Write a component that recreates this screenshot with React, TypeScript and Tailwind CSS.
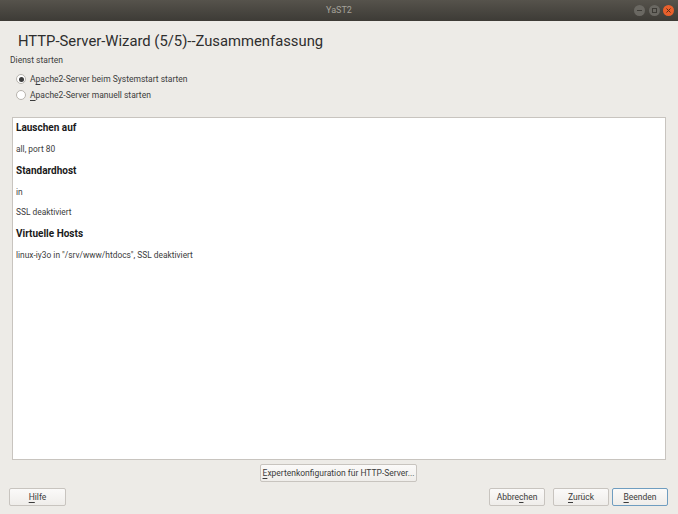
import type { ReactNode } from 'react'

function Btn({ children, width, primary }: { children: ReactNode; width: string; primary?: boolean }) {
  return (
    <button
      type="button"
      className={`${width} block h-[18px] rounded-[2px] border bg-gradient-to-b from-[#fbfaf9] to-[#efedea] text-[8.5px] leading-none text-[#3c3c3c] ${
        primary ? 'border-[#6f9dc0]' : 'border-[#c8c4bf]'
      }`}
    >
      {children}
    </button>
  )
}

function Radio({ checked, children }: { checked?: boolean; children: ReactNode }) {
  return (
    <div className="flex h-[16px] items-center gap-[4px] pl-[16px]">
      <span className="flex h-[10px] w-[10px] items-center justify-center rounded-full border border-[#b8b4ae] bg-white">
        {checked && <span className="h-[5px] w-[5px] rounded-full bg-[#3c3c3c]" />}
      </span>
      <span className="text-[8.5px] text-[#3c3c3c]">{children}</span>
    </div>
  )
}

function Heading({ children }: { children: ReactNode }) {
  return <div className="text-[10px] leading-[12px] font-bold text-[#1a1a1a]">{children}</div>
}

function Line({ children }: { children: ReactNode }) {
  return <div className="text-[8.4px] leading-[10px] text-[#3c3c3c]">{children}</div>
}

export default function App() {
  return (
    <div className="flex h-[514px] w-[678px] flex-col overflow-hidden bg-[#edebe7] font-['Roboto',sans-serif]">
      {/* title bar */}
      <div className="relative flex h-[21px] shrink-0 items-center justify-center bg-gradient-to-b from-[#56534c] to-[#3d3b36]">
        <span className="text-[9px] text-[#a5a29a]">YaST2</span>
        <div className="absolute right-[4px] top-[5px] flex gap-[3.5px]">
          <span className="flex h-[11px] w-[11px] items-center justify-center rounded-full bg-[#6a6862]">
            <svg width="7" height="7" viewBox="0 0 7 7"><path d="M1 3.5h5" stroke="#3d3b36" strokeWidth="1" /></svg>
          </span>
          <span className="flex h-[11px] w-[11px] items-center justify-center rounded-full bg-[#6a6862]">
            <svg width="7" height="7" viewBox="0 0 7 7"><rect x="1.5" y="1.5" width="4" height="4" fill="none" stroke="#3d3b36" /></svg>
          </span>
          <span className="flex h-[11px] w-[11px] items-center justify-center rounded-full bg-[#e9602c]">
            <svg width="7" height="7" viewBox="0 0 7 7"><path d="M1.5 1.5l4 4M5.5 1.5l-4 4" stroke="#5a2a14" strokeWidth="1" /></svg>
          </span>
        </div>
      </div>

      <div className="flex min-h-0 flex-1 flex-col">
        <div className="pl-[18px] pt-[11px] text-[14.8px] leading-[19px] text-[#2e2e2e]">
          HTTP-Server-Wizard (5/5)--Zusammenfassung
        </div>
        <div className="mt-[4px] pl-[10px] text-[8.5px] leading-[11px] text-[#3c3c3c]">Dienst starten</div>
        <div className="mt-[5px]">
          <Radio checked>
            A<span className="underline underline-offset-2">p</span>ache2-Server beim Systemstart starten
          </Radio>
          <Radio>
            <span className="underline underline-offset-2">A</span>pache2-Server manuell starten
          </Radio>
        </div>

        <div className="mx-[12px] mt-[14px] flex h-[343px] flex-col border border-[#c8c4bf] bg-white pl-[3px] pt-[4px]">
          <Heading>Lauschen auf</Heading>
          <div className="mt-[10px]"><Line>all, port 80</Line></div>
          <div className="mt-[11px]"><Heading>Standardhost</Heading></div>
          <div className="mt-[10px]"><Line>in</Line></div>
          <div className="mt-[10px]"><Line>SSL deaktiviert</Line></div>
          <div className="mt-[11px]"><Heading>Virtuelle Hosts</Heading></div>
          <div className="mt-[10px]"><Line>linux-iy3o in "/srv/www/htdocs", SSL deaktiviert</Line></div>
        </div>

        <div className="mt-[4px] flex justify-center pr-[1px]">
          <Btn width="w-[157px]">
            <span className="underline underline-offset-2">E</span>xpertenkonfiguration für HTTP-Server...
          </Btn>
        </div>

        <div className="mt-[6px] flex items-center pl-[9px] pr-[10px]">
          <Btn width="w-[57px]">
            <span className="underline underline-offset-2">H</span>ilfe
          </Btn>
          <div className="ml-auto flex items-center">
            <Btn width="w-[56px]">
              Abbre<span className="underline underline-offset-2">c</span>hen
            </Btn>
            <div className="ml-[8px]">
              <Btn width="w-[56px]">
                <span className="underline underline-offset-2">Z</span>urück
              </Btn>
            </div>
            <div className="ml-[3px]">
              <Btn width="w-[56px]" primary>
                <span className="underline underline-offset-2">B</span>eenden
              </Btn>
            </div>
          </div>
        </div>
      </div>
    </div>
  )
}
